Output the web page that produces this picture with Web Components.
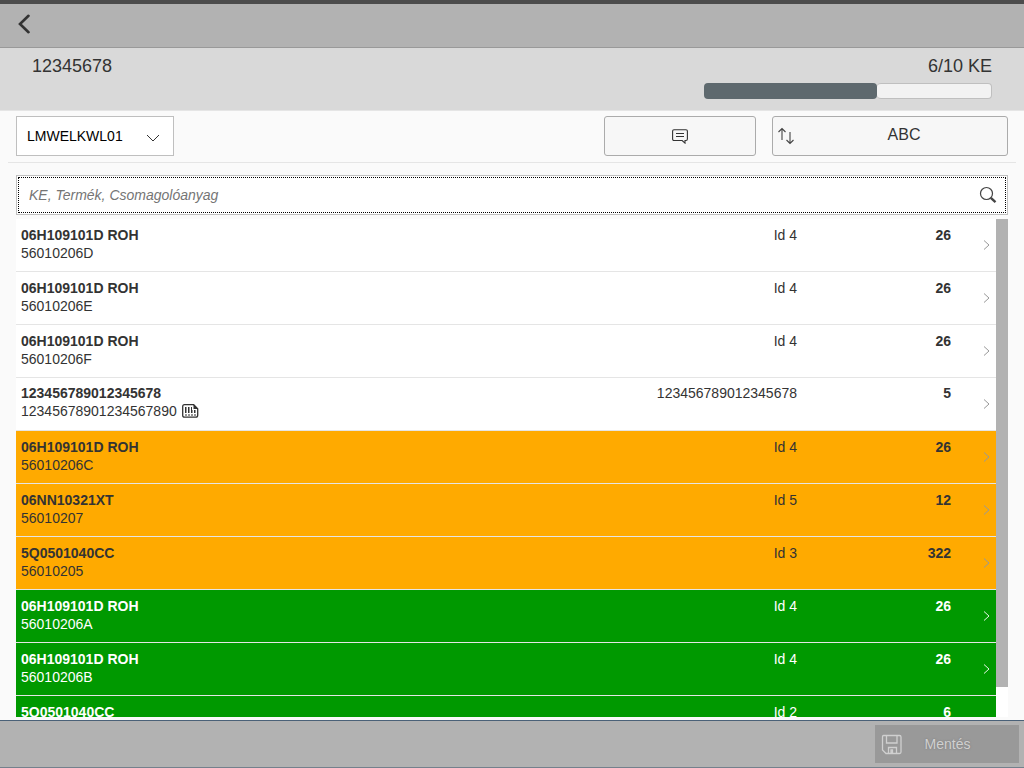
<!DOCTYPE html>
<html lang="hu">
<head>
<meta charset="utf-8">
<meta name="viewport" content="width=device-width, initial-scale=1">
<title>12345678</title>
<style>
  html, body { margin: 0; height: 100%; }
  body { font: 14px/18px "Liberation Sans", Arial, sans-serif; color: #333; background: #fafafa; }
</style>
</head>
<body>
<picking-page></picking-page>

<script>
const define = (name, html, setup) => customElements.define(name, class extends HTMLElement {
  constructor() {
    super();
    this.attachShadow({ mode: "open" }).innerHTML = "<style>*{box-sizing:border-box}:host{box-sizing:border-box}button,select,input{font:inherit;color:inherit;margin:0}svg{display:block;fill:none;stroke:currentColor}</style>" + html;
  }
  connectedCallback() { if (setup) setup(this, this.shadowRoot); }
});

define("shell-bar", `
<style>
  :host { display: flex; align-items: flex-start; height: 48px; flex: none; padding: 0 8px; background: #b2b2b2; border-top: 4px solid #4c4c4c; border-bottom: 1px solid #999; }
  button { display: grid; place-items: center; width: 32px; height: 40px; padding: 0; border: 0; background: none; color: #333; }
</style>
<button type="button" aria-label="Vissza"><svg width="16" height="20" viewBox="0 0 16 20" stroke-width="2.6" stroke-linecap="round"><path d="M12.500 1.800 4 10l8.500 8.200"/></svg></button>`);

define("progress-bar", `
<style>
  :host { display: flex; height: 16px; }
  .done { background: #5e696e; border-radius: 4px; }
  .rest { flex: 1; background: #f2f2f2; border: 1px solid #bfbfbf; border-left: 0; border-radius: 4px; }
</style>
<div class="done"></div><div class="rest"></div>`, (el, root) => {
  const value = el.getAttribute("value");
  el.setAttribute("role", "progressbar");
  el.setAttribute("aria-valuenow", value);
  root.querySelector(".done").style.width = value + "%";
});

define("order-header", `
<style>
  :host { display: flex; justify-content: space-between; flex: none; height: 63px; padding: 6px 32px 0; background: #d9d9d9; border-bottom: 1px solid #e5e5e5; font-size: 18px; line-height: 24px; }
  .status { width: 30%; text-align: right; }
  progress-bar { margin-top: 5px; }
</style>
<div><slot></slot></div>
<div class="status"><slot name="status"></slot><progress-bar value="60"></progress-bar></div>`);

define("tool-bar", `
<style>
  :host { display: flex; gap: 16px; flex: none; margin: 0 8px; padding: 5px 8px 6px; border-bottom: 1px solid #e5e5e5; }
  .pick { display: grid; width: 158px; height: 40px; margin-right: auto; align-items: center; color: #000; }
  .pick > * { grid-area: 1 / 1; }
  select { appearance: none; width: 100%; height: 100%; padding: 0 32px 0 10px; border: 1px solid #bfbfbf; border-radius: 0; background: #fff; }
  .pick svg { justify-self: end; margin-right: 14px; margin-top: 4px; pointer-events: none; color: #333; }
  button { display: flex; align-items: center; height: 40px; padding: 0; border: 1px solid #ababab; border-radius: 3px; background: #f7f7f7; color: #333; font-size: 16px; }
  .note { width: 152px; justify-content: center; }
  .sort { width: 236px; padding: 0 4px; }
  .sort svg { color: #444; }
  .sort span { flex: 1; padding: 0 0 2px 10px; }
</style>
<label class="pick"><select aria-label="Munkahely"><option>LMWELKWL01</option></select>
<svg width="14" height="8" viewBox="0 0 14 8"><path d="m1 1 6 6 6-6"/></svg></label>
<button class="note" type="button" aria-label="Megjegyzés"><svg width="16" height="15" viewBox="0 0 16 15" stroke-width="1.1"><path d="M2 .7h12q1.400 0 1.400 1.400v8q0 1.400-1.400 1.400h-1v2.600l-2.800-2.600H2Q.6 11.500.6 10.100V2.100Q.6.7 2 .7ZM4 4.500h8M4 7.500h8"/></svg></button>
<button class="sort" type="button"><svg width="18" height="18" viewBox="0 0 18 18" stroke-width="1.100"><path d="M5 13V1.500M1.500 5 5 1.500 8.500 5M13 5v11.500M9.500 13l3.500 3.500 3.500-3.500"/></svg><span>ABC</span></button>`);

define("search-field", `
<style>
  :host { display: block; flex: none; margin: 12px 16px 4px; padding: 1px; background: #fff; border: 1px solid #bfbfbf; }
  .inner { display: flex; align-items: center; height: 36px; padding: 0 8px 0 10px; border: 1px dotted #000; }
  input { flex: 1; min-width: 0; height: 100%; padding: 0; border: 0; outline: 0; background: none; }
  input::placeholder { color: #757575; font-style: italic; opacity: 1; }
  button { padding: 0; border: 0; background: none; color: #444; }
</style>
<div class="inner"><input type="search" aria-label="Keresés" placeholder="KE, Termék, Csomagolóanyag">
<button type="button" aria-label="Keresés"><svg width="18" height="18" viewBox="0 0 18 18"><circle cx="7.500" cy="7.500" r="6" stroke-width="1.200"/><path d="m11.800 11.800 4.700 4.400" stroke-width="2.400"/></svg></button></div>`);

define("stock-row", `
<style>
  :host { display: grid; grid-template-columns: 1fr 200px 154px 45px; align-items: center; height: 53px; padding: 0 0 2px 5px; background: #fff; border-bottom: 1px solid #e5e5e5; }
  :host([state="partial"]) { background: #fa0; }
  :host([state="done"]) { background: #090; color: #fff; }
  .id, .qty { text-align: right; align-self: start; padding-top: 7px; }
  :host([barcode]) .id, :host([barcode]) .qty { padding-top: 6px; }
  b { display: block; }
  .sub { display: flex; gap: 5px; }
  .sub svg { display: none; }
  :host([barcode]) .sub svg { display: block; margin-top: 1px; margin-bottom: 3px; }
  .go { justify-self: end; margin-right: 6px; margin-top: 2px; color: #999; }
  :host([state="done"]) .go { color: #e5f5e5; }
</style>
<div><b><slot name="product"></slot></b><div class="sub"><slot></slot><svg width="17" height="16" viewBox="0 0 17 16"><path d="M2.500 1.700h9.200l4 4v6.600q0 1.900-1.900 1.900H2.500q-1.800 0-1.800-1.800V3.500q0-1.800 1.800-1.800Z" stroke-width="1.300"/><path d="M11.500 1.500v4.500h4.500Z" fill="currentColor" stroke="none"/><path d="M3.500 4v6M6.500 4v6M9.500 4v6M12.500 7v3" stroke-width="1"/><path d="M4.500 4v6M7.500 4v6M10.500 7v3M13.500 7v3" stroke-width="1" stroke-opacity=".5"/><path d="M3 12h11" stroke-width="1.500" stroke-opacity=".7" stroke-dasharray="2 1"/></svg></div></div>
<div class="id"><slot name="place"></slot></div>
<b class="qty"><slot name="quantity"></slot></b>
<svg class="go" width="7" height="12" viewBox="0 0 7 12"><path d="m1 1.500 5 4.500-5 4.500"/></svg>`);

define("stock-list", `
<style>
  :host { display: flex; flex: 1; min-height: 0; margin: 0 16px 3px; }
  .items { flex: 1; overflow-y: auto; scrollbar-width: none; }
  .items::-webkit-scrollbar { display: none; }
  .track { width: 12px; background: #fff; }
  .thumb { background: #b2b2b2; }
</style>
<div class="items" role="list"></div>
<div class="track"><div class="thumb"></div></div>`, (el, root) => {
  const rows = [
    ["06H109101D ROH", "56010206D", "Id 4", "26", ""],
    ["06H109101D ROH", "56010206E", "Id 4", "26", ""],
    ["06H109101D ROH", "56010206F", "Id 4", "26", ""],
    ["123456789012345678", "12345678901234567890", "123456789012345678", "5", "", true],
    ["06H109101D ROH", "56010206C", "Id 4", "26", "partial"],
    ["06NN10321XT", "56010207", "Id 5", "12", "partial"],
    ["5Q0501040CC", "56010205", "Id 3", "322", "partial"],
    ["06H109101D ROH", "56010206A", "Id 4", "26", "done"],
    ["06H109101D ROH", "56010206B", "Id 4", "26", "done"],
    ["5Q0501040CC", "", "Id 2", "6", "done"]
  ];
  const items = root.querySelector(".items");
  const thumb = root.querySelector(".thumb");
  items.innerHTML = rows.map(([product, unit, place, quantity, state, barcode]) =>
    `<stock-row role="listitem" state="${state}"${barcode ? " barcode" : ""}><span slot="product">${product}</span><span>${unit || "&nbsp;"}</span><span slot="place">${place}</span><span slot="quantity">${quantity}</span></stock-row>`).join("");
  const update = () => {
    const view = items.clientHeight, full = items.scrollHeight;
    thumb.style.height = view / full * 100 + "%";
    thumb.style.marginTop = items.scrollTop / full * view + "px";
  };
  items.addEventListener("scroll", update);
  new ResizeObserver(update).observe(items);
  update();
});

define("action-footer", `
<style>
  :host { display: flex; justify-content: flex-end; align-items: center; flex: none; height: 48px; padding: 0 5px; background: #b2b2b2; border-top: 1px solid #4a6178; border-bottom: 1px solid #74808c; }
  button { display: flex; align-items: center; width: 144px; height: 38px; padding: 0 6px; border: 0; background: #999; color: #d0d0d0; text-shadow: 0 0 2px #777; }
  span { flex: 1; padding-right: 20px; }
</style>
<button type="button" disabled><svg width="21" height="21" viewBox="0 0 21 21" stroke-width="1.300"><path d="M2.500 1.500h16q1.500 0 1.500 1.500v15q0 1.500-1.500 1.500H5L1.500 16V3q0-1.500 1-1.500ZM5.500 1.500v7.500h10.500v-7.500M7.500 19.500v-6h8v6M10 16h1.500v2H10Z"/></svg><span>Mentés</span></button>`);

define("picking-page", `
<style>:host { display: flex; flex-direction: column; height: 100vh; }</style>
<shell-bar></shell-bar>
<order-header><span>12345678</span><span slot="status">6/10 KE</span></order-header>
<tool-bar></tool-bar>
<search-field></search-field>
<stock-list></stock-list>
<action-footer></action-footer>`);
</script>
</body>
</html>
